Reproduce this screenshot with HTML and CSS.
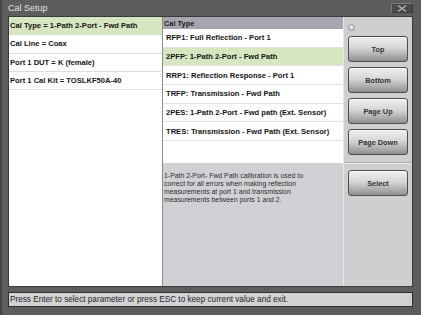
FILE: index.html
```html
<!DOCTYPE html>
<html lang="en">
<head>
  <meta charset="UTF-8">
  <meta name="viewport" content="width=device-width, initial-scale=1.0">
  <title>Cal Setup</title>
  <link rel="stylesheet" href="styles.css">
</head>
<body>
  <div class="window">
    <div class="titlebar">
      <span class="title">Cal Setup</span>
      <span class="close">
        <svg width="10" height="7" viewBox="0 0 10 7">
          <path d="M1 0.5 L9 6.5 M9 0.5 L1 6.5" stroke="#bdbdbd" stroke-width="1.1" fill="none"/>
        </svg>
      </span>
    </div>

    <div class="main">
      <div class="params">
        <div class="param selected">Cal Type = 1-Path 2-Port - Fwd Path</div>
        <div class="param">Cal Line = Coax</div>
        <div class="param">Port 1 DUT = K (female)</div>
        <div class="param">Port 1 Cal Kit = TOSLKF50A-40</div>
      </div>

      <div class="choices">
        <div class="choices-head">Cal Type</div>
        <div class="choice-list">
          <div class="choice">RFP1: Full Reflection - Port 1</div>
          <div class="choice selected">2PFP: 1-Path 2-Port - Fwd Path</div>
          <div class="choice">RRP1: Reflection Response - Port 1</div>
          <div class="choice">TRFP: Transmission - Fwd Path</div>
          <div class="choice">2PES: 1-Path 2-Port - Fwd path (Ext. Sensor)</div>
          <div class="choice">TRES: Transmission - Fwd Path (Ext. Sensor)</div>
        </div>
        <p class="help">
          1-Path 2-Port- Fwd Path calibration is used to<br>
          correct for all errors when making reflection<br>
          measurements at port 1 and transmission<br>
          measurements between ports 1 and 2.
        </p>
      </div>

      <div class="actions">
        <span class="dot"></span>
        <button class="btn">Top</button>
        <button class="btn">Bottom</button>
        <button class="btn">Page Up</button>
        <button class="btn">Page Down</button>
        <div class="sep"></div>
        <button class="btn">Select</button>
      </div>
    </div>

    <div class="status">Press Enter to select parameter or press ESC to keep current value and exit.</div>
  </div>
</body>
</html>
```

FILE: styles.css
```css
body {
  margin: 0;
  width: 421px;
  height: 315px;
  background: #5d5d5d;
  font-family: "Liberation Sans", Arial, sans-serif;
  overflow: hidden;
}

.window {
  height: 315px;
  box-sizing: border-box;
  padding: 0 8px 8px 6px;
  border-left: 2px solid #464646;
}

.titlebar {
  height: 16px;
  display: flex;
  align-items: center;
  justify-content: space-between;
}

.title {
  color: #e2e2e2;
  font-size: 9px;
}

.close {
  width: 22px;
  height: 10px;
  box-sizing: border-box;
  background: #4a4a4a;
  border: 1px solid #7a7a7a;
  border-right-color: #3a3a3a;
  border-bottom-color: #3a3a3a;
  display: flex;
  align-items: center;
  justify-content: center;
}

.main {
  height: 271px;
  box-sizing: border-box;
  display: flex;
  border: 1px solid #3a3a3a;
}

.params {
  width: 153px;
  background: white;
}

.param {
  height: 18.3px;
  box-sizing: border-box;
  border-bottom: 1px solid #dedede;
  padding-left: 1px;
  display: flex;
  align-items: center;
  font-size: 7.6px;
  font-weight: bold;
  color: #151515;
  white-space: nowrap;
}

.selected {
  background: #d5e6c0;
}

.choices {
  width: 181px;
  box-sizing: border-box;
  border-left: 1px solid #8c8c8c;
  display: flex;
  flex-direction: column;
}

.choices-head {
  height: 12px;
  background: #a9a5b0;
  padding-left: 1px;
  display: flex;
  align-items: center;
  font-size: 7.4px;
  font-weight: bold;
  color: #1a1a1a;
}

.choice-list {
  flex: 1;
  background: white;
}

.choice {
  height: 18.67px;
  box-sizing: border-box;
  border-bottom: 1px solid #e2e2e2;
  padding-left: 3px;
  display: flex;
  align-items: center;
  font-size: 7.6px;
  font-weight: bold;
  color: #151515;
  white-space: nowrap;
}

.help {
  margin: 0;
  height: 123px;
  box-sizing: border-box;
  background: #d1d0d4;
  padding: 9px 1px 0;
  font-size: 6.9px;
  line-height: 8px;
  color: #2e2e2e;
  white-space: nowrap;
}

.actions {
  width: 69px;
  box-sizing: border-box;
  border-left: 1px solid #e8e8ea;
  background: #cfced1;
  display: flex;
  flex-direction: column;
  padding-top: 7px;
}

.dot {
  width: 7px;
  height: 7px;
  margin: 0 0 5px 4px;
  border-radius: 50%;
  background: radial-gradient(circle at 35% 35%, #f6f6f6, #b0b0b0);
  border: 1px solid #979797;
  box-sizing: border-box;
}

.btn {
  width: 60px;
  height: 26px;
  margin: 0 0 5px 4px;
  padding: 0;
  box-sizing: border-box;
  border: 1px solid #4c4c4c;
  border-radius: 3px;
  background: linear-gradient(#efefef, #d6d6d6 45%, #a3a3a3 85%, #8f8f8f);
  box-shadow: inset 0 1px 0 #fafafa;
  font-family: "Liberation Sans", Arial, sans-serif;
  font-size: 7.3px;
  font-weight: bold;
  color: #333;
}

.sep {
  height: 1px;
  margin: 2px 0 6px;
  background: #a9a8ab;
  border-bottom: 1px solid #f0f0f2;
}

.status {
  margin-top: 5px;
  height: 15px;
  box-sizing: border-box;
  border: 1px solid #2f2f2f;
  background: #d2d1d4;
  padding-left: 1px;
  display: flex;
  align-items: center;
  font-size: 8.2px;
  color: #262626;
  white-space: nowrap;
}
```
